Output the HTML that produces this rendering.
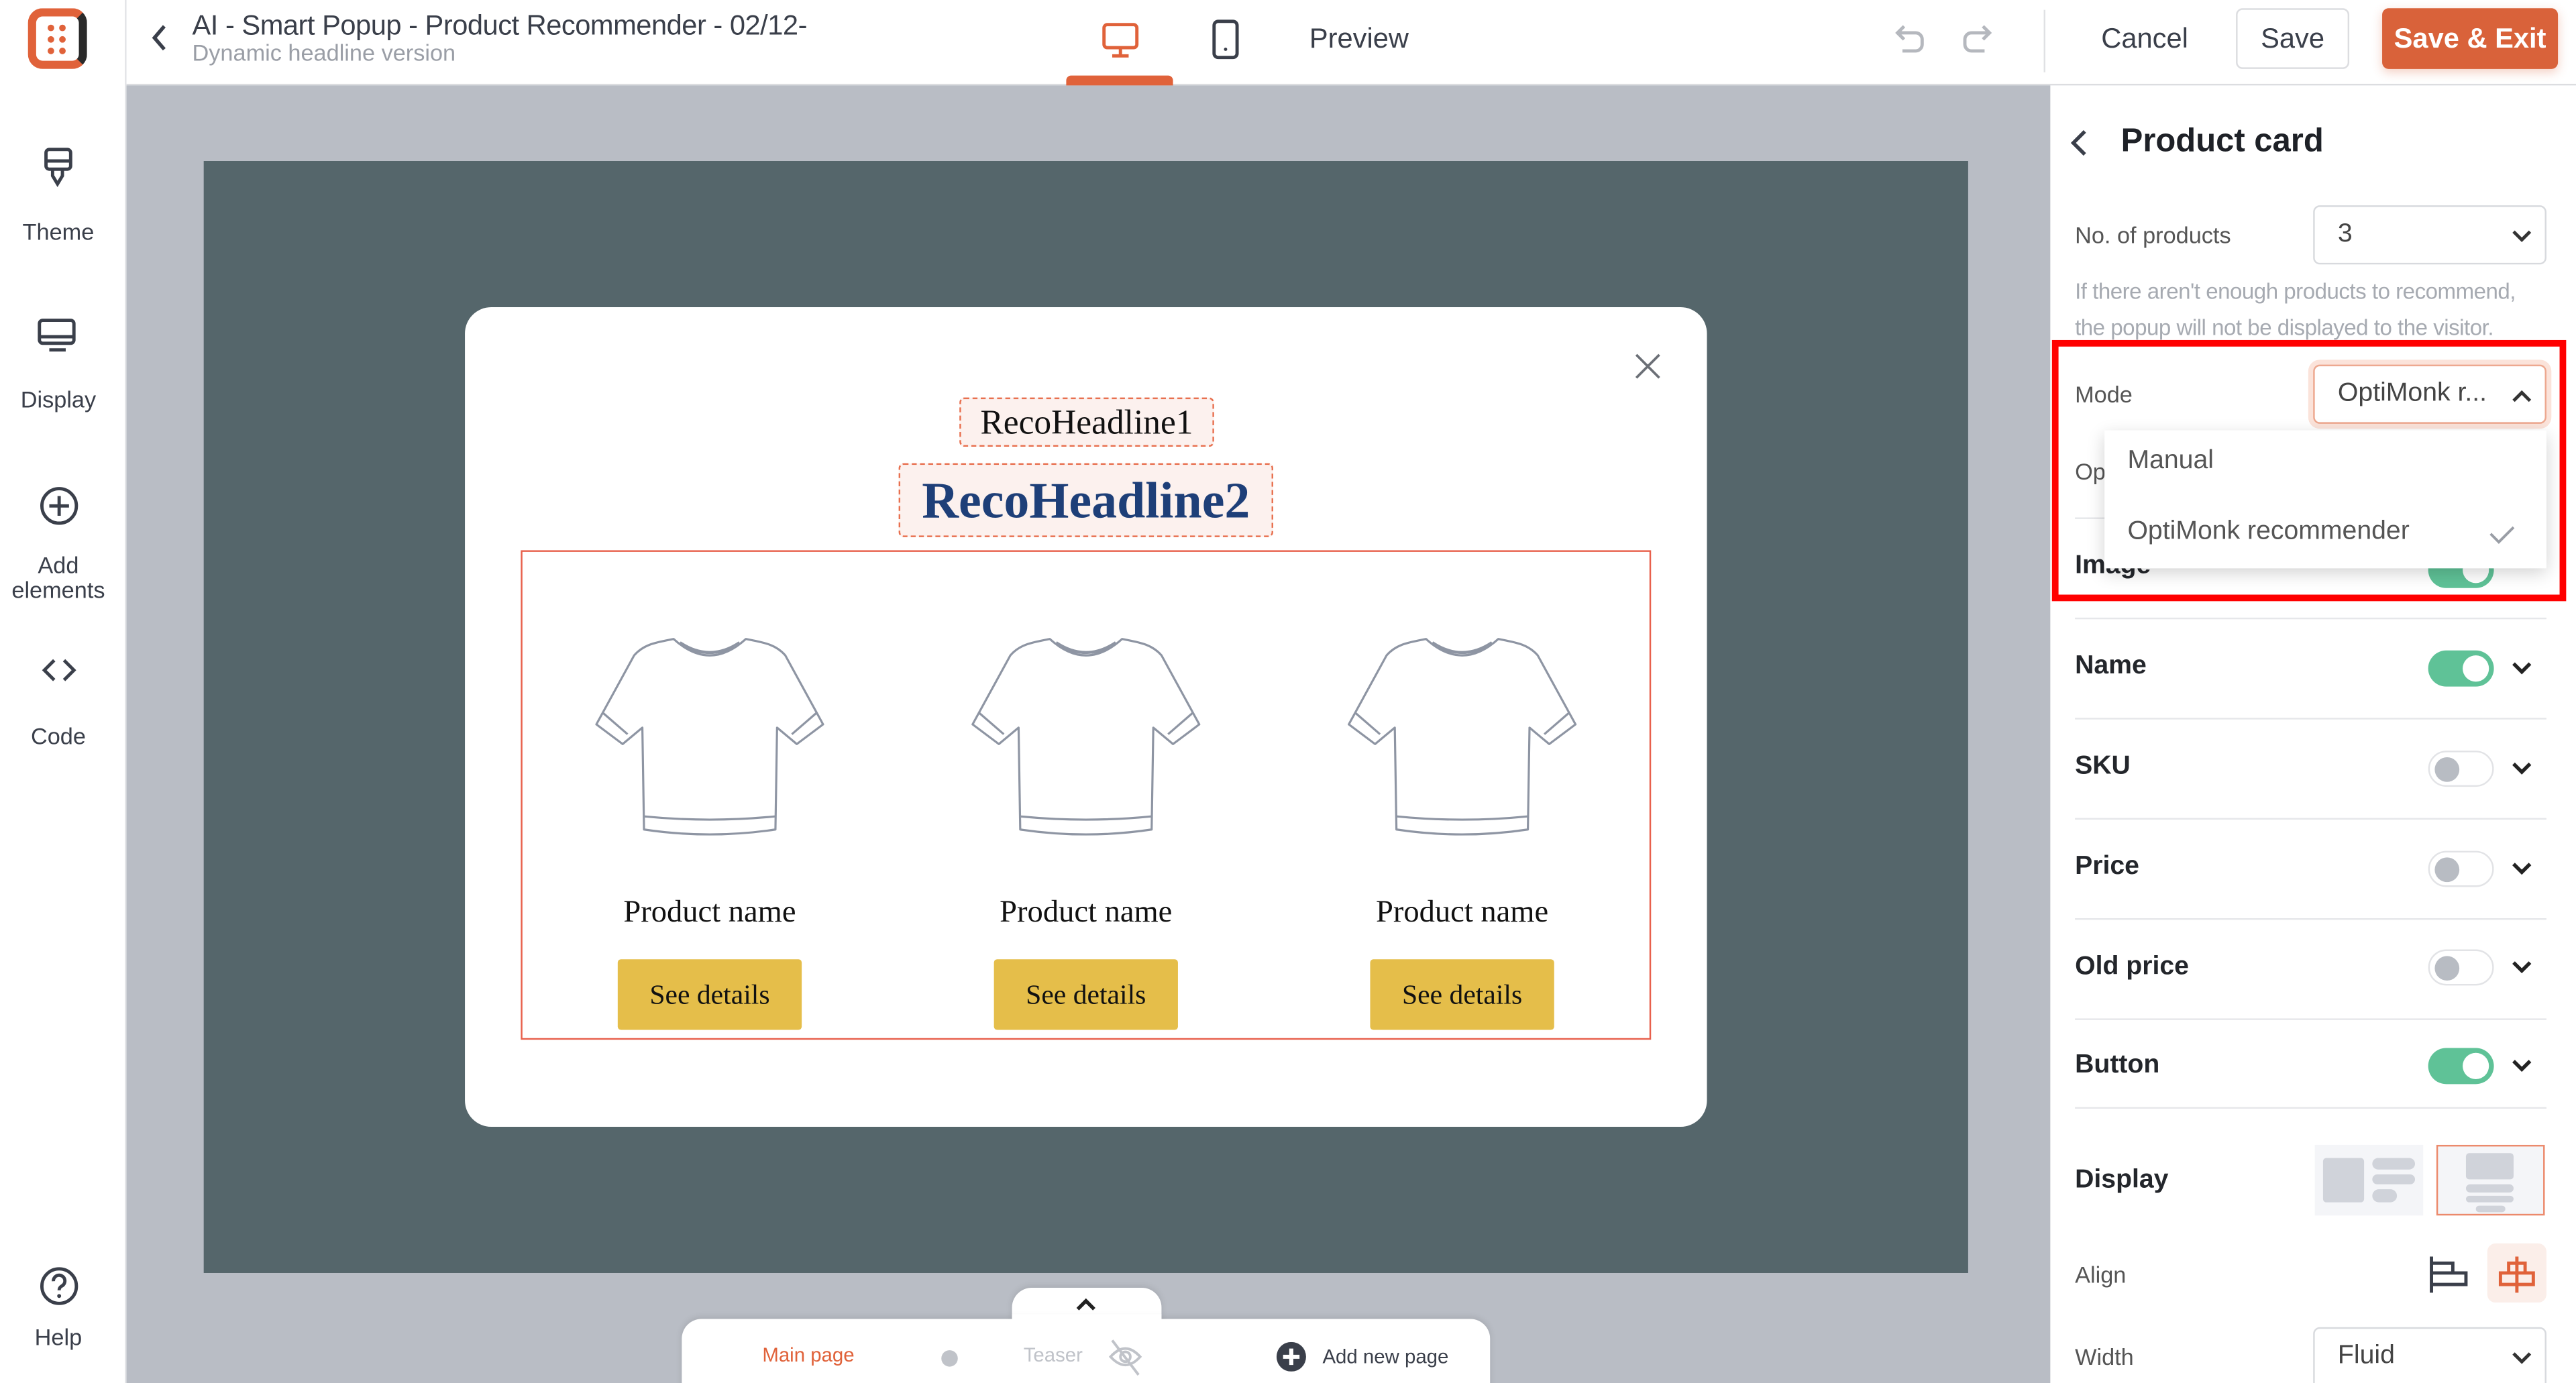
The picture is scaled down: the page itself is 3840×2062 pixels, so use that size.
<!DOCTYPE html>
<html><head><meta charset="utf-8"><style>
*{box-sizing:border-box;margin:0;padding:0}
html,body{width:3840px;height:2061px;overflow:hidden;background:#fff}
#w{position:absolute;left:0;top:0;width:1568px;height:842px;transform:scale(2.449);transform-origin:0 0;font-family:"Liberation Sans",sans-serif;color:#333;overflow:hidden}
.a{position:absolute}
.serif{font-family:"Liberation Serif",serif}
.side{text-align:center;width:71px;left:0;font-size:14px;color:#3a3f4a}
.lbl{left:1263px;font-size:14px;color:#555}
.row{left:1263px;font-size:16px;font-weight:bold;color:#23262b}
.sep{left:1263px;width:287px;height:1px;background:#e6e7ea}
.tg{left:1478px;width:40px;height:22px;border-radius:11px}
.tg.on{background:#5fc297}
.tg.on::after{content:"";position:absolute;right:3px;top:3px;width:16px;height:16px;border-radius:50%;background:#fff}
.tg.off{background:#fff;border:1px solid #e2e3e6}
.tg.off::after{content:"";position:absolute;left:3px;top:3px;width:15px;height:15px;border-radius:50%;background:#b8bcc3}
.chev{left:1527px;width:16px;height:10px}
.sel{left:1408px;width:142px;height:36px;border:1px solid #d8dade;border-radius:4px;background:#fff;font-size:16px;color:#444;padding-left:14px;line-height:34px}
.btn{width:112px;height:43px;background:#e5be4a;border-radius:2px;font-size:17px;color:#111;text-align:center;line-height:43px}
.pn{width:160px;text-align:center;font-size:19px;color:#111}
</style></head><body><div id="w">
<div class="a" style="left:0;top:0;width:1568px;height:52px;background:#fff;border-bottom:1px solid #dcdde0"></div>
<div class="a" style="left:0;top:0;width:77px;height:842px;background:#fff;border-right:1px solid #e3e4e7"></div>
<div class="a" style="left:77px;top:52px;width:1168px;height:790px;background:#b9bdc5"></div>
<div class="a" style="left:17px;top:5px;width:36px;height:37px;border:5px solid #e0623a;border-radius:9px;border-right-color:#2a2a2a;border-bottom-color:#e0623a"></div>
<svg class="a" style="left:27px;top:13px" width="16" height="22"><g fill="#e0623a"><circle cx="4" cy="4" r="2"/><circle cx="11" cy="4" r="2"/><circle cx="4" cy="11" r="2"/><circle cx="11" cy="11" r="2"/><circle cx="4" cy="18" r="2"/><circle cx="11" cy="18" r="2"/></g></svg>
<svg class="a" style="left:91px;top:14px" width="12" height="18"><path d="M9 2 L3 9 L9 16" stroke="#3a3f4a" stroke-width="2.2" fill="none"/></svg>
<div class="a" style="left:117px;top:6px;font-size:17px;color:#3a3f4a;white-space:nowrap;letter-spacing:-0.2px">AI - Smart Popup - Product Recommender - 02/12-</div>
<div class="a" style="left:117px;top:24px;font-size:14px;color:#9a9ea6;white-space:nowrap">Dynamic headline version</div>
<svg class="a" style="left:670px;top:13px" width="24" height="24"><rect x="2" y="2" width="20" height="14" rx="2" stroke="#e0623a" stroke-width="2" fill="none"/><path d="M12 16v5M7 21h10" stroke="#e0623a" stroke-width="2"/></svg>
<div class="a" style="left:649px;top:46px;width:65px;height:6px;background:#e0623a;border-radius:3px 3px 0 0"></div>
<svg class="a" style="left:737px;top:11px" width="18" height="26"><rect x="2" y="2" width="14" height="22" rx="2.5" stroke="#3a3f4a" stroke-width="2" fill="none"/><circle cx="9" cy="19" r="1" fill="#3a3f4a"/></svg>
<div class="a" style="left:797px;top:14px;font-size:17px;color:#3a3f4a">Preview</div>
<svg class="a" style="left:1151px;top:13px" width="64" height="22"><path d="M8 3 L4 7 L8 11 M4 7 H15 a4 4 0 0 1 4 4 v3 a4 4 0 0 1 -4 4 H7" stroke="#b5b8be" stroke-width="2" fill="none"/><path d="M56 3 L60 7 L56 11 M60 7 H49 a4 4 0 0 0 -4 4 v3 a4 4 0 0 0 4 4 H57" stroke="#b5b8be" stroke-width="2" fill="none"/></svg>
<div class="a" style="left:1244px;top:6px;width:1px;height:38px;background:#e0e1e4"></div>
<div class="a" style="left:1279px;top:14px;font-size:17px;color:#3a3f4a">Cancel</div>
<div class="a" style="left:1361px;top:5px;width:69px;height:37px;border:1px solid #dcdde0;border-radius:4px;font-size:17px;color:#3a3f4a;text-align:center;line-height:35px">Save</div>
<div class="a" style="left:1450px;top:5px;width:107px;height:37px;background:#d9623a;border-radius:4px;font-size:17px;color:#fff;font-weight:bold;text-align:center;line-height:37px;box-shadow:0 2px 6px rgba(217,98,58,.3)">Save &amp; Exit</div>
<svg class="a" style="left:25px;top:89px" width="22" height="28"><rect x="3" y="2" width="15" height="12" rx="2" stroke="#3a3f4a" stroke-width="2" fill="none"/><path d="M3 9h15M7 14v4l3 5 3-5v-4" stroke="#3a3f4a" stroke-width="2" fill="none"/></svg>
<div class="a side" style="top:133px">Theme</div>
<svg class="a" style="left:22px;top:193px" width="26" height="24"><rect x="2" y="2" width="21" height="14" rx="2" stroke="#3a3f4a" stroke-width="2" fill="none"/><path d="M2 12h21M8 20h10" stroke="#3a3f4a" stroke-width="2"/></svg>
<div class="a side" style="top:235px">Display</div>
<svg class="a" style="left:23px;top:295px" width="26" height="26"><circle cx="13" cy="13" r="10.5" stroke="#3a3f4a" stroke-width="2" fill="none"/><path d="M13 7v12M7 13h12" stroke="#3a3f4a" stroke-width="2"/></svg>
<div class="a side" style="top:337px;line-height:15px">Add<br>elements</div>
<svg class="a" style="left:24px;top:400px" width="24" height="16"><path d="M9 2 L3 8 L9 14 M15 2 L21 8 L15 14" stroke="#3a3f4a" stroke-width="2" fill="none"/></svg>
<div class="a side" style="top:440px">Code</div>
<svg class="a" style="left:23px;top:770px" width="26" height="26"><circle cx="13" cy="13" r="10.5" stroke="#3a3f4a" stroke-width="2" fill="none"/><path d="M9.5 10a3.5 3.5 0 1 1 5 3c-1 .6-1.5 1.2-1.5 2.5" stroke="#3a3f4a" stroke-width="2" fill="none"/><circle cx="13" cy="19" r="1.2" fill="#3a3f4a"/></svg>
<div class="a side" style="top:806px">Help</div>
<div class="a" style="left:124px;top:98px;width:1074px;height:677px;background:#55666b"></div>
<div class="a" style="left:283px;top:187px;width:756px;height:499px;background:#fff;border-radius:16px"></div>
<svg class="a" style="left:994px;top:214px" width="18" height="18"><path d="M2 2L16 16M16 2L2 16" stroke="#6b6f76" stroke-width="1.5"/></svg>
<div class="a serif" style="left:584px;top:242px;width:155px;height:30px;background:#fcf1ee;border:1px dashed #e8704f;border-radius:3px;text-align:center;font-size:21px;line-height:28px;color:#111">RecoHeadline1</div>
<div class="a serif" style="left:547px;top:282px;width:228px;height:45px;background:#fcf1ee;border:1px dashed #e8704f;border-radius:3px;text-align:center;font-size:31px;font-weight:bold;line-height:43px;color:#1e3f78">RecoHeadline2</div>
<div class="a" style="left:317px;top:335px;width:688px;height:298px;border:1px solid #e8604c"></div>
<svg width="0" height="0" style="position:absolute"><defs><g id="shirt" stroke="#8e95a3" stroke-width="1.3" fill="none" stroke-linejoin="round"><path d="M48 4 C38 6 30 7 24 14 L1 56 L17 68 L29 58 L30 120 Q70 126 110 120 L111 58 L123 68 L139 56 L116 14 C110 7 102 6 92 4 Q70 24 48 4 Z"/><path d="M52 6 Q70 18 88 6 M55 9 Q70 16 85 9"/><path d="M5 49 L20 62 M135 49 L120 62"/><path d="M30 112 Q70 116 110 112"/></g></defs></svg>
<svg class="a" style="left:362px;top:385px" width="140" height="127"><use href="#shirt"/></svg>
<svg class="a" style="left:591px;top:385px" width="140" height="127"><use href="#shirt"/></svg>
<svg class="a" style="left:820px;top:385px" width="140" height="127"><use href="#shirt"/></svg>
<div class="a pn serif" style="left:352px;top:545px">Product name</div>
<div class="a pn serif" style="left:581px;top:545px">Product name</div>
<div class="a pn serif" style="left:810px;top:545px">Product name</div>
<div class="a btn serif" style="left:376px;top:584px">See details</div>
<div class="a btn serif" style="left:605px;top:584px">See details</div>
<div class="a btn serif" style="left:834px;top:584px">See details</div>
<div class="a" style="left:616px;top:784px;width:91px;height:24px;background:#fff;border-radius:12px 12px 0 0;box-shadow:0 -1px 4px rgba(0,0,0,.1)"></div>
<div class="a" style="left:415px;top:803px;width:492px;height:45px;background:#fff;border-radius:12px 12px 0 0;box-shadow:0 -1px 4px rgba(0,0,0,.1)"></div>
<div class="a" style="left:616px;top:800px;width:91px;height:10px;background:#fff"></div>
<svg class="a" style="left:654px;top:789px" width="14" height="10"><path d="M2 8 L7 3 L12 8" stroke="#222" stroke-width="2.2" fill="none"/></svg>
<div class="a" style="left:464px;top:818px;font-size:12px;color:#e0623a">Main page</div>
<div class="a" style="left:573px;top:822px;width:10px;height:10px;border-radius:50%;background:#c0c3c9"></div>
<div class="a" style="left:623px;top:818px;font-size:12px;color:#c0c3c9">Teaser</div>
<svg class="a" style="left:673px;top:813px" width="24" height="26"><path d="M3 13 Q12 3 21 13 Q12 23 3 13Z" stroke="#c0c3c9" stroke-width="1.6" fill="none"/><circle cx="12" cy="13" r="3" stroke="#c0c3c9" stroke-width="1.6" fill="none"/><path d="M4 3 L20 24" stroke="#c0c3c9" stroke-width="1.6"/></svg>
<svg class="a" style="left:777px;top:817px" width="18" height="18"><circle cx="9" cy="9" r="9" fill="#3a3f4a"/><path d="M9 4v10M4 9h10" stroke="#fff" stroke-width="2.5"/></svg>
<div class="a" style="left:805px;top:819px;font-size:12px;color:#3a3f4a">Add new page</div>
<div class="a" style="left:1245px;top:52px;width:3px;height:790px;background:#b9bdc5"></div>
<svg class="a" style="left:1259px;top:78px" width="14" height="18"><path d="M10 2 L3 9 L10 16" stroke="#3a3f4a" stroke-width="2.2" fill="none"/></svg>
<div class="a" style="left:1291px;top:75px;font-size:20px;font-weight:bold;color:#1e2127">Product card</div>
<div class="a lbl" style="top:135px">No. of products</div>
<div class="a sel" style="top:125px">3</div>
<svg class="a chev" style="top:139px"><path d="M3 2 L8 7 L13 2" stroke="#333" stroke-width="2" fill="none"/></svg>
<div class="a" style="left:1263px;top:167px;font-size:13.5px;color:#a6aab1;line-height:22px;white-space:nowrap;letter-spacing:-0.2px">If there aren't enough products to recommend,<br>the popup will not be displayed to the visitor.</div>
<div class="a lbl" style="top:232px">Mode</div>
<div class="a sel" style="top:222px;border-color:#eda88f;box-shadow:0 0 0 3px #fbe3da">OptiMonk r...</div>
<svg class="a chev" style="top:236px"><path d="M3 8 L8 3 L13 8" stroke="#333" stroke-width="2" fill="none"/></svg>
<div class="a lbl" style="top:279px">Op</div>
<div class="a sep" style="top:315px"></div>
<div class="a row" style="top:336px">Image</div>
<div class="a tg on" style="top:336px"></div>
<div class="a" style="left:1281px;top:262px;width:269px;height:84px;background:#fff;box-shadow:0 3px 10px rgba(0,0,0,.18)"></div>
<div class="a" style="left:1295px;top:272px;font-size:16px;color:#555">Manual</div>
<div class="a" style="left:1295px;top:315px;font-size:16px;color:#555">OptiMonk recommender</div>
<svg class="a" style="left:1514px;top:318px" width="18" height="14"><path d="M2 7 L7 12 L16 3" stroke="#9a9ea6" stroke-width="1.6" fill="none"/></svg>
<div class="a" style="left:1249px;top:207px;width:313px;height:159px;border:4px solid #f00"></div>
<div class="a sep" style="top:376px"></div>
<div class="a row" style="top:397px">Name</div><div class="a tg on" style="top:396px"></div><svg class="a chev" style="top:402px"><path d="M3 2 L8 7 L13 2" stroke="#222" stroke-width="2.2" fill="none"/></svg>
<div class="a sep" style="top:437px"></div>
<div class="a row" style="top:458px">SKU</div><div class="a tg off" style="top:457px"></div><svg class="a chev" style="top:463px"><path d="M3 2 L8 7 L13 2" stroke="#222" stroke-width="2.2" fill="none"/></svg>
<div class="a sep" style="top:498px"></div>
<div class="a row" style="top:519px">Price</div><div class="a tg off" style="top:518px"></div><svg class="a chev" style="top:524px"><path d="M3 2 L8 7 L13 2" stroke="#222" stroke-width="2.2" fill="none"/></svg>
<div class="a sep" style="top:559px"></div>
<div class="a row" style="top:580px">Old price</div><div class="a tg off" style="top:578px"></div><svg class="a chev" style="top:584px"><path d="M3 2 L8 7 L13 2" stroke="#222" stroke-width="2.2" fill="none"/></svg>
<div class="a sep" style="top:620px"></div>
<div class="a row" style="top:640px">Button</div><div class="a tg on" style="top:638px"></div><svg class="a chev" style="top:644px"><path d="M3 2 L8 7 L13 2" stroke="#222" stroke-width="2.2" fill="none"/></svg>
<div class="a sep" style="top:674px"></div>
<div class="a row" style="top:710px">Display</div>
<div class="a" style="left:1409px;top:697px;width:66px;height:43px;background:#f4f5f8"></div>
<div class="a" style="left:1414px;top:705px;width:25px;height:27px;background:#d0d3da;border-radius:2px"></div>
<div class="a" style="left:1444px;top:705px;width:26px;height:7px;background:#d0d3da;border-radius:4px"></div>
<div class="a" style="left:1444px;top:715px;width:26px;height:6px;background:#d0d3da;border-radius:3px"></div>
<div class="a" style="left:1444px;top:724px;width:15px;height:8px;background:#d0d3da;border-radius:4px"></div>
<div class="a" style="left:1483px;top:697px;width:66px;height:43px;background:#f4f5f8;border:1px solid #ec8a6c"></div>
<div class="a" style="left:1501px;top:702px;width:29px;height:16px;background:#d0d3da;border-radius:2px"></div>
<div class="a" style="left:1501px;top:721px;width:29px;height:5px;background:#d0d3da;border-radius:3px"></div>
<div class="a" style="left:1501px;top:728px;width:29px;height:4px;background:#d0d3da;border-radius:2px"></div>
<div class="a" style="left:1507px;top:734px;width:18px;height:4px;background:#d0d3da;border-radius:2px"></div>
<div class="a lbl" style="top:768px">Align</div>
<svg class="a" style="left:1477px;top:764px" width="26" height="24"><path d="M3 1v22M3 5h13v6H3M3 11h21v7H3" stroke="#3a3f4a" stroke-width="2" fill="none"/></svg>
<div class="a" style="left:1514px;top:757px;width:36px;height:36px;background:#fbeee9;border-radius:5px"></div>
<svg class="a" style="left:1519px;top:764px" width="26" height="24"><path d="M13 1v22M8 5h10v6H8ZM3 11h20v7H3Z" stroke="#e0623a" stroke-width="2" fill="none"/></svg>
<div class="a lbl" style="top:818px">Width</div>
<div class="a sel" style="top:808px;height:40px">Fluid</div>
<svg class="a chev" style="top:822px"><path d="M3 2 L8 7 L13 2" stroke="#333" stroke-width="2" fill="none"/></svg>
</div></body></html>
